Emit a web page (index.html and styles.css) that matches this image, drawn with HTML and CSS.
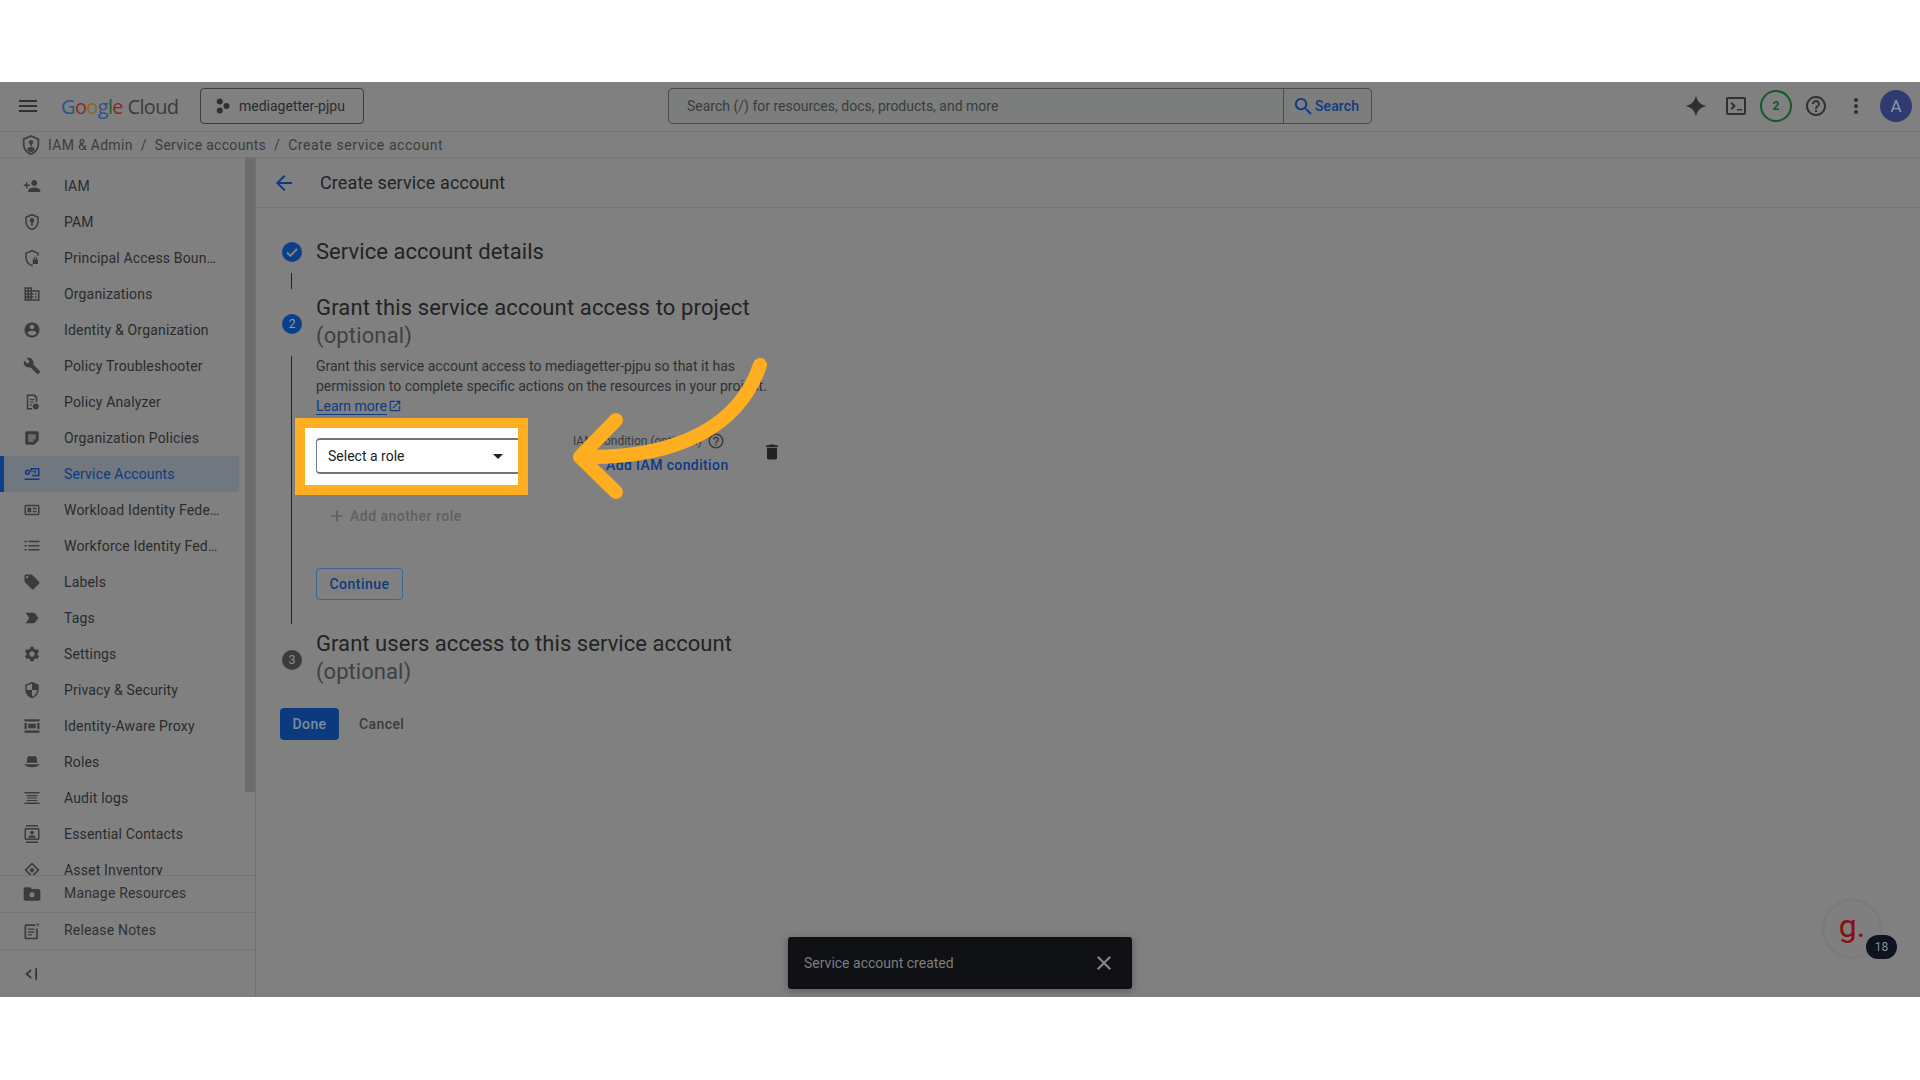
FILE: index.html
```html
<!DOCTYPE html>
<html lang="en">
<head>
    <meta charset="UTF-8">
    <meta name="viewport" content="width=device-width, initial-scale=1.0">
    <title>Create service account</title>
    <link rel="stylesheet" href="styles.css">
</head>
<body>
    <div class="screen">
        <!-- Top bar -->
        <header class="topbar">
            <svg class="menu-icon" viewBox="0 0 24 24"><path d="M3 18h18v-2H3v2zm0-5h18v-2H3v2zm0-7v2h18V6H3z"/></svg>
            <div class="logo"><span class="g-blue">G</span><span class="g-red">o</span><span class="g-yellow">o</span><span class="g-blue">g</span><span class="g-green">l</span><span class="g-red">e</span> <span class="logo-cloud">Cloud</span></div>
            <button class="project-btn">
                <svg class="project-icon" viewBox="0 0 24 24"><circle cx="9" cy="6" r="4"/><circle cx="9" cy="18" r="4"/><circle cx="18" cy="12" r="4"/></svg>
                mediagetter-pjpu
            </button>
            <div class="search">
                <div class="search-input">Search (/) for resources, docs, products, and more</div>
                <div class="search-btn">
                    <svg class="search-icon" viewBox="0 0 24 24"><path d="M15.5 14h-.79l-.28-.27C15.41 12.59 16 11.11 16 9.5 16 5.91 13.09 3 9.5 3S3 5.91 3 9.5 5.91 16 9.5 16c1.61 0 3.09-.59 4.23-1.57l.27.28v.79l5 4.99L20.49 19l-4.99-5zm-6 0C7.01 14 5 11.99 5 9.5S7.01 5 9.5 5 14 7.01 14 9.5 11.99 14 9.5 14z"/></svg>
                    Search
                </div>
            </div>
            <div class="top-actions">
                <svg class="top-icon" viewBox="0 0 24 24"><path d="M12 1c.9 6.4 4.6 10.1 11 11-6.4.9-10.1 4.6-11 11-.9-6.4-4.6-10.1-11-11 6.4-.9 10.1-4.6 11-11z"/></svg>
                <svg class="top-icon" viewBox="0 0 24 24"><path d="M20 3H4c-1.1 0-2 .9-2 2v14c0 1.1.9 2 2 2h16c1.1 0 2-.9 2-2V5c0-1.1-.9-2-2-2zm0 16H4V5h16v14zM6.5 9.4 7.9 8l4 4-4 4-1.4-1.4L9.1 12 6.5 9.4zM13 15h5v1.5h-5V15z"/></svg>
                <div class="notif-ring">2</div>
                <svg class="top-icon" viewBox="0 0 24 24"><path d="M11 18h2v-2h-2v2zm1-16C6.48 2 2 6.48 2 12s4.48 10 10 10 10-4.48 10-10S17.52 2 12 2zm0 18c-4.41 0-8-3.59-8-8s3.59-8 8-8 8 3.59 8 8-3.59 8-8 8zm0-14c-2.21 0-4 1.79-4 4h2c0-1.1.9-2 2-2s2 .9 2 2c0 2-3 1.75-3 5h2c0-2.25 3-2.5 3-5 0-2.21-1.79-4-4-4z"/></svg>
                <svg class="top-icon" viewBox="0 0 24 24"><path d="M12 8c1.1 0 2-.9 2-2s-.9-2-2-2-2 .9-2 2 .9 2 2 2zm0 2c-1.1 0-2 .9-2 2s.9 2 2 2 2-.9 2-2-.9-2-2-2zm0 6c-1.1 0-2 .9-2 2s.9 2 2 2 2-.9 2-2-.9-2-2-2z"/></svg>
                <div class="avatar">A</div>
            </div>
        </header>

        <!-- Breadcrumb -->
        <div class="crumbs">
            <svg class="crumb-icon" viewBox="0 0 24 24"><path d="M12 1 3 5v6c0 5.55 3.84 10.74 9 12 5.16-1.26 9-6.45 9-12V5l-9-4zm7 10c0 4.52-2.98 8.69-7 9.93-4.02-1.24-7-5.41-7-9.93V6.3l7-3.11 7 3.11V11z"/><path d="M12 6.5a2.5 2.5 0 0 1 1 4.8V13h-2v-1.7a2.5 2.5 0 0 1 1-4.8zM8 17c0-2 2-3 4-3s4 1 4 3v.6c-1 1-2.5 2-4 2.5-1.5-.5-3-1.5-4-2.5V17z"/></svg>
            <span>IAM &amp; Admin</span><span class="crumb-sep">/</span><span>Service accounts</span><span class="crumb-sep">/</span><span class="crumb-current">Create service account</span>
        </div>

        <div class="body-row">
            <!-- Sidebar -->
            <aside class="sidebar">
                <div class="nav-scroll">
                    <nav class="nav-list">
                        <a class="nav-item"><svg class="nav-icon" viewBox="0 0 24 24"><path d="M15 12c2.21 0 4-1.79 4-4s-1.79-4-4-4-4 1.79-4 4 1.79 4 4 4zm-9-2V7H4v3H1v2h3v3h2v-3h3v-2H6zm9 4c-2.67 0-8 1.34-8 4v2h16v-2c0-2.66-5.33-4-8-4z"/></svg>IAM</a>
                        <a class="nav-item"><svg class="nav-icon" viewBox="0 0 24 24"><path d="M12 1 3 5v6c0 5.55 3.84 10.74 9 12 5.16-1.26 9-6.45 9-12V5l-9-4zm7 10c0 4.52-2.98 8.69-7 9.93-4.02-1.24-7-5.41-7-9.93V6.3l7-3.11 7 3.11V11z"/><path d="M12 6.5a3 3 0 0 1 1.2 5.75V17h-2.4v-4.75A3 3 0 0 1 12 6.5z"/></svg>PAM</a>
                        <a class="nav-item"><svg class="nav-icon" viewBox="0 0 24 24"><path d="M12 1 3 5v6c0 5.55 3.84 10.74 9 12l1.5-.4-.9-1.8-.6.1C8 19.7 5 15.5 5 11V6.3l7-3.11 7 3.11V9h2V5l-9-4z"/><path d="M19 14v-1a2.5 2.5 0 0 0-5 0v1h-1v6h7v-6h-1zm-3.5-1a1 1 0 0 1 2 0v1h-2v-1z"/></svg>Principal Access Boun…</a>
                        <a class="nav-item"><svg class="nav-icon" viewBox="0 0 24 24"><path d="M12 7V3H2v18h20V7H12zM6 19H4v-2h2v2zm0-4H4v-2h2v2zm0-4H4V9h2v2zm0-4H4V5h2v2zm4 12H8v-2h2v2zm0-4H8v-2h2v2zm0-4H8V9h2v2zm0-4H8V5h2v2zm10 12h-8v-2h2v-2h-2v-2h2v-2h-2V9h8v10zm-2-8h-2v2h2v-2zm0 4h-2v2h2v-2z"/></svg>Organizations</a>
                        <a class="nav-item"><svg class="nav-icon" viewBox="0 0 24 24"><path d="M12 2C6.48 2 2 6.48 2 12s4.48 10 10 10 10-4.48 10-10S17.52 2 12 2zm0 3c1.66 0 3 1.34 3 3s-1.34 3-3 3-3-1.34-3-3 1.34-3 3-3zm0 14.2c-2.5 0-4.71-1.28-6-3.22.03-1.99 4-3.08 6-3.08 1.99 0 5.97 1.09 6 3.08-1.29 1.94-3.5 3.22-6 3.22z"/></svg>Identity &amp; Organization</a>
                        <a class="nav-item"><svg class="nav-icon" viewBox="0 0 24 24"><path d="m22.7 19-9.1-9.1c.9-2.3.4-5-1.5-6.9-2-2-5-2.4-7.4-1.3L9 6 6 9 1.6 4.7C.4 7.1.9 10.1 2.9 12.1c1.9 1.9 4.6 2.4 6.9 1.5l9.1 9.1c.4.4 1 .4 1.4 0l2.3-2.3c.5-.4.5-1.1.1-1.4z"/></svg>Policy Troubleshooter</a>
                        <a class="nav-item"><svg class="nav-icon" viewBox="0 0 24 24"><path d="M5 2h11l3 3v7h-2V6h-2V4H7v16h5v2H5V2z"/><path d="M9 8h6v1.5H9zM9 11.5h5V13H9zM9 15h3v1.5H9z"/><circle cx="17" cy="18" r="4"/></svg>Policy Analyzer</a>
                        <a class="nav-item"><svg class="nav-icon" viewBox="0 0 24 24"><path d="M19 3H5c-1.1 0-2 .9-2 2v14c0 1.1.9 2 2 2h10l6-6V5c0-1.1-.9-2-2-2zM7 7h10v7h-3v3H7V7z"/><rect x="6" y="6" width="12" height="10" opacity=".3"/></svg>Organization Policies</a>
                        <a class="nav-item active"><svg class="nav-icon" viewBox="0 0 24 24"><path d="M10 4h12v11H12v-2h8V6h-8v1.5h-2V4zM2 18h20v2H2z"/><path d="M6 6a3.5 3.5 0 1 1 0 7 3.5 3.5 0 0 1 0-7zm0 2a1.5 1.5 0 1 0 0 3 1.5 1.5 0 0 0 0-3zM9 8.5h6V11h2V8.5h1v-1H9z"/></svg>Service Accounts</a>
                        <a class="nav-item"><svg class="nav-icon" viewBox="0 0 24 24"><path d="M20 5H4c-1.1 0-2 .9-2 2v10c0 1.1.9 2 2 2h16c1.1 0 2-.9 2-2V7c0-1.1-.9-2-2-2zm0 12H4V7h16v10z"/><path d="M6 9h5v6H6zM13 9h5v2h-5zM13 13h5v2h-5z"/></svg>Workload Identity Fede…</a>
                        <a class="nav-item"><svg class="nav-icon" viewBox="0 0 24 24"><path d="M2 12.5h3v-2H2v2zM2 18h3v-2H2v2zM2 7h3V5H2v2zm5 5.5h15v-2H7v2zM7 18h15v-2H7v2zM7 5v2h15V5H7z"/></svg>Workforce Identity Fed…</a>
                        <a class="nav-item"><svg class="nav-icon" viewBox="0 0 24 24"><path d="m21.41 11.58-9-9C12.05 2.22 11.55 2 11 2H4c-1.1 0-2 .9-2 2v7c0 .55.22 1.05.59 1.42l9 9c.36.36.86.58 1.41.58s1.05-.22 1.41-.59l7-7c.37-.36.59-.86.59-1.41s-.23-1.06-.59-1.42zM5.5 7C4.67 7 4 6.33 4 5.5S4.67 4 5.5 4 7 4.67 7 5.5 6.33 7 5.5 7z"/></svg>Labels</a>
                        <a class="nav-item"><svg class="nav-icon" viewBox="0 0 24 24"><path d="m3.5 18.99 11 .01c.67 0 1.27-.33 1.63-.84L20.5 12l-4.37-6.16c-.36-.51-.96-.84-1.63-.84l-11 .01L8.34 12 3.5 18.99z"/></svg>Tags</a>
                        <a class="nav-item"><svg class="nav-icon" viewBox="0 0 24 24"><path d="M19.14 12.94c.04-.3.06-.61.06-.94 0-.32-.02-.64-.07-.94l2.03-1.58c.18-.14.23-.41.12-.61l-1.92-3.32c-.12-.22-.37-.29-.59-.22l-2.39.96c-.5-.38-1.03-.7-1.62-.94l-.36-2.54c-.04-.24-.24-.41-.48-.41h-3.84c-.24 0-.43.17-.47.41l-.36 2.54c-.59.24-1.13.57-1.62.94l-2.39-.96c-.22-.08-.47 0-.59.22L2.74 8.87c-.12.21-.08.47.12.61l2.03 1.58c-.05.3-.09.63-.09.94s.02.64.07.94l-2.03 1.58c-.18.14-.23.41-.12.61l1.92 3.32c.12.22.37.29.59.22l2.39-.96c.5.38 1.03.7 1.62.94l.36 2.54c.05.24.24.41.48.41h3.84c.24 0 .44-.17.47-.41l.36-2.54c.59-.24 1.13-.56 1.62-.94l2.39.96c.22.08.47 0 .59-.22l1.92-3.32c.12-.22.07-.47-.12-.61l-2.01-1.58zM12 15.6c-1.98 0-3.6-1.62-3.6-3.6s1.62-3.6 3.6-3.6 3.6 1.62 3.6 3.6-1.62 3.6-3.6 3.6z"/></svg>Settings</a>
                        <a class="nav-item"><svg class="nav-icon" viewBox="0 0 24 24"><path d="M12 1 3 5v6c0 5.55 3.84 10.74 9 12 5.16-1.26 9-6.45 9-12V5l-9-4zm0 10.99h7c-.53 4.12-3.28 7.79-7 8.94V12H5V6.3l7-3.11v8.8z"/></svg>Privacy &amp; Security</a>
                        <a class="nav-item"><svg class="nav-icon" viewBox="0 0 24 24"><path d="M2 3h20v3H2zM2 18h20v3H2zM2 8h3v8H2zM19 8h3v8h-3zM7 9h10v6H7z"/></svg>Identity-Aware Proxy</a>
                        <a class="nav-item"><svg class="nav-icon" viewBox="0 0 24 24"><path d="M6 6c.3-1.2 1.2-2 2.4-2 1.2 0 2 .8 3.6.8S14.4 4 15.6 4c1.2 0 2.1.8 2.4 2l1.2 7H4.8L6 6zM2 15h20c-1 2.7-5 4-10 4S3 17.7 2 15z"/></svg>Roles</a>
                        <a class="nav-item"><svg class="nav-icon" viewBox="0 0 24 24"><path d="M2 4h20v2H2zM5 8h14v1.5H5zM5 11.2h14v1.5H5zM5 14.5h14V16H5zM2 18h20v2H2z"/></svg>Audit logs</a>
                        <a class="nav-item"><svg class="nav-icon" viewBox="0 0 24 24"><path d="M4 0h16v2H4zM4 22h16v2H4zM20 4H4C2.9 4 2 4.9 2 6v12c0 1.1.9 2 2 2h16c1.1 0 2-.9 2-2V6c0-1.1-.9-2-2-2zm0 14H4V6h16v12z"/><circle cx="12" cy="10" r="2.5"/><path d="M7 17c0-2.5 2.5-3.5 5-3.5s5 1 5 3.5H7z"/></svg>Essential Contacts</a>
                        <a class="nav-item"><svg class="nav-icon" viewBox="0 0 24 24"><path d="m12 2 10 10-10 10L2 12 12 2zm0 3-7 7 7 7 7-7-7-7zm0 3.5 3.5 3.5-3.5 3.5L8.5 12 12 8.5z"/></svg>Asset Inventory</a>
                    </nav>
                    <div class="nav-scrollbar"></div>
                </div>
                <a class="nav-foot"><svg class="foot-icon" viewBox="0 0 24 24"><path d="M20 6h-8l-2-2H4c-1.1 0-2 .9-2 2v12c0 1.1.9 2 2 2h16c1.1 0 2-.9 2-2V8c0-1.1-.9-2-2-2z"/><circle class="foot-gear" cx="12" cy="13" r="3"/></svg>Manage Resources</a>
                <a class="nav-foot"><svg class="foot-icon" viewBox="0 0 24 24"><path d="M16 4H5c-1.1 0-2 .9-2 2v14c0 1.1.9 2 2 2h12c1.1 0 2-.9 2-2V9h-2v11H5V6h11V4zM7 9h8v1.5H7zM7 12.5h8V14H7zM7 16h5v1.5H7zM19 2l.6 1.9 1.9.6-1.9.6L19 7l-.6-1.9-1.9-.6 1.9-.6L19 2z"/></svg>Release Notes</a>
                <div class="collapse"><svg class="collapse-icon" viewBox="0 0 24 24"><path d="M11 6 4 12l7 6v-2.6L7 12l4-3.4V6zM16 5h2v14h-2z"/></svg></div>
            </aside>

            <!-- Main -->
            <main class="main">
                <div class="page-head">
                    <svg class="back-icon" viewBox="0 0 24 24"><path d="M20 11H7.83l5.59-5.59L12 4l-8 8 8 8 1.41-1.41L7.83 13H20v-2z"/></svg>
                    <h1 class="page-title">Create service account</h1>
                </div>
                <div class="stepper">
                    <div class="step-head">
                        <svg class="step-check" viewBox="0 0 20 20"><circle cx="10" cy="10" r="10"/><path class="check-mark" d="m5 10.5 3.4 3.3L15 7"/></svg>
                        <h2 class="step-title">Service account details</h2>
                    </div>
                    <div class="step-link"></div>
                    <div class="step-head">
                        <div class="step-num">2</div>
                        <h2 class="step-title step-wide">Grant this service account access to project<br><span class="optional">(optional)</span></h2>
                    </div>
                    <div class="step-body">
                        <p class="step-desc">Grant this service account access to mediagetter-pjpu so that it has<br>permission to complete specific actions on the resources in your project.<br><a class="learn-more">Learn more</a><svg class="ext-icon" viewBox="0 0 24 24"><path d="M19 19H5V5h7V3H5c-1.11 0-2 .9-2 2v14c0 1.1.89 2 2 2h14c1.1 0 2-.9 2-2v-7h-2v7zM14 3v2h3.59l-9.83 9.83 1.41 1.41L19 6.41V10h2V3h-7z"/></svg></p>
                        <div class="role-row">
                            <div class="role-cell">
                                <div class="role-frame"></div>
                                <div class="role-select">Select a role<span class="caret"></span></div>
                            </div>
                            <div class="condition">
                                <div class="condition-label">IAM condition (optional)<svg class="help-icon" viewBox="0 0 24 24"><path d="M11 18h2v-2h-2v2zm1-16C6.48 2 2 6.48 2 12s4.48 10 10 10 10-4.48 10-10S17.52 2 12 2zm0 18c-4.41 0-8-3.59-8-8s3.59-8 8-8 8 3.59 8 8-3.59 8-8 8zm0-14c-2.21 0-4 1.79-4 4h2c0-1.1.9-2 2-2s2 .9 2 2c0 2-3 1.75-3 5h2c0-2.25 3-2.5 3-5 0-2.21-1.79-4-4-4z"/></svg></div>
                                <div class="condition-add">Add IAM condition</div>
                            </div>
                            <svg class="trash-icon" viewBox="0 0 24 24"><path d="M6 19c0 1.1.9 2 2 2h8c1.1 0 2-.9 2-2V7H6v12zM19 4h-3.5l-1-1h-5l-1 1H5v2h14V4z"/></svg>
                        </div>
                        <div class="add-role"><svg class="plus-icon" viewBox="0 0 24 24"><path d="M19 13h-6v6h-2v-6H5v-2h6V5h2v6h6v2z"/></svg>Add another role</div>
                        <button class="continue-btn">Continue</button>
                    </div>
                    <div class="step-head step-three">
                        <div class="step-num grey">3</div>
                        <h2 class="step-title">Grant users access to this service account<br><span class="optional">(optional)</span></h2>
                    </div>
                    <div class="form-actions">
                        <button class="done-btn">Done</button>
                        <button class="cancel-btn">Cancel</button>
                    </div>
                </div>
            </main>
        </div>

        <!-- Overlays -->
        <svg class="arrow" viewBox="0 0 1920 915"><path d="M760 283C740 343 680 375 590 375"/><path d="M616 338 580 375 616 410"/></svg>
        <div class="toast"><span>Service account created</span><svg class="toast-close" viewBox="0 0 24 24"><path d="M19 6.41 17.59 5 12 10.59 6.41 5 5 6.41 10.59 12 5 17.59 6.41 19 12 13.41 17.59 19 19 17.59 13.41 12 19 6.41z"/></svg></div>
        <div class="g-widget">g<span class="g-dot">.</span><span class="g-badge">18</span></div>
    </div>
</body>
</html>
```

FILE: styles.css
```css
* {
    box-sizing: border-box;
}
body {
    margin: 0;
    background-color: #fff;
    font-family: Roboto, "Liberation Sans", sans-serif;
    font-size: 14px;
    color: #2a2b2d;
}
button {
    font-family: inherit;
}
.screen {
    position: relative;
    display: flex;
    flex-direction: column;
    height: 915px;
    margin-top: 82px;
    background-color: #808080;
    overflow: hidden;
}

/* top bar */
.topbar {
    display: flex;
    align-items: center;
    flex: 0 0 50px;
    padding-bottom: 1px;
    border-bottom: 1px solid #767676;
}
.menu-icon {
    width: 24px;
    height: 24px;
    margin-left: 16px;
    fill: #2f3032;
}
.logo {
    width: 120px;
    margin-left: 21px;
    font-family: "Open Sans", sans-serif;
    font-size: 20px;
    letter-spacing: -.65px;
    white-space: nowrap;
}
.g-blue { color: #2a5391; }
.g-red { color: #8b2a22; }
.g-yellow { color: #8a6a10; }
.g-green { color: #1b6332; }
.logo-cloud { color: #3a3b3d; }
.project-btn {
    display: flex;
    align-items: center;
    width: 164px;
    height: 36px;
    margin-left: 19px;
    padding: 0 0 0 12px;
    border: 1px solid #3c3d3f;
    border-radius: 4px;
    background: none;
    font-size: 14px;
    color: #2a2b2d;
}
.project-icon {
    width: 18px;
    height: 18px;
    margin-right: 8px;
    fill: #2f3032;
}
.search {
    display: flex;
    width: 704px;
    height: 36px;
    margin-left: 304px;
    border: 1px solid #4a4b4c;
    border-radius: 4px;
    background-color: #7c7e7d;
}
.search-input {
    flex: 1;
    padding-left: 18px;
    line-height: 34px;
    color: #3a3b3d;
}
.search-btn {
    display: flex;
    align-items: center;
    width: 88px;
    padding-left: 9px;
    border-left: 1px solid #4a4b4c;
    font-weight: 500;
    letter-spacing: .1px;
    color: #0e3b80;
}
.search-icon {
    width: 23px;
    height: 23px;
    margin-left: -1px;
    fill: #0e3b80;
}
.top-actions {
    display: flex;
    align-items: center;
    margin-left: 312px;
}
.top-icon {
    width: 24px;
    height: 24px;
    margin-right: 16px;
    fill: #2f3032;
}
.notif-ring {
    width: 32px;
    height: 32px;
    margin: 0 12px 0 -4px;
    border: 2px solid #0f5a2a;
    border-radius: 50%;
    font-size: 12px;
    font-weight: 700;
    line-height: 28px;
    text-align: center;
    color: #0f5a2a;
}
.avatar {
    width: 32px;
    height: 32px;
    margin-left: -4px;
    border-radius: 50%;
    background-color: #2f3a70;
    font-size: 17px;
    line-height: 32px;
    text-align: center;
    color: #8d93b5;
}

/* breadcrumb */
.crumbs {
    display: flex;
    align-items: center;
    flex: 0 0 26px;
    padding-left: 20px;
    border-bottom: 1px solid #767676;
    letter-spacing: .3px;
    color: #3b3c3e;
}
.crumb-icon {
    width: 22px;
    height: 22px;
    margin-right: 6px;
    fill: #3f4042;
}
.crumb-sep {
    margin: 0 8px;
}
.crumb-current {
    letter-spacing: .57px;
}

/* sidebar */
.body-row {
    display: flex;
    flex: 1;
    min-height: 0;
}
.sidebar {
    display: flex;
    flex-direction: column;
    flex: 0 0 256px;
    border-right: 1px solid #727272;
}
.nav-scroll {
    display: flex;
    flex: 0 0 717px;
    min-height: 0;
    overflow: hidden;
}
.nav-list {
    flex: 0 0 245px;
    padding-top: 10px;
}
.nav-item {
    display: flex;
    align-items: center;
    width: 239px;
    height: 36px;
    border-left: 4px solid transparent;
    letter-spacing: .17px;
    color: #2a2b2d;
    white-space: nowrap;
}
.nav-item.active {
    border-left-color: #0b3f8a;
    background-color: #70777f;
    color: #0e3b80;
}
.nav-icon {
    flex: none;
    width: 18px;
    height: 18px;
    margin: 0 23px 0 19px;
    fill: #3a3b3d;
}
.active .nav-icon {
    fill: #0e3b80;
}
.nav-scrollbar {
    flex: 0 0 10px;
    height: 634px;
    background-color: #6c6c6c;
}
.nav-foot {
    display: flex;
    align-items: center;
    flex: 0 0 37px;
    padding: 0 0 3px 23px;
    border-top: 1px solid #757575;
    letter-spacing: .17px;
    color: #2f3032;
}
.foot-icon {
    width: 20px;
    height: 20px;
    margin: 3px 22px 0 -1px;
    fill: #3a3b3d;
}
.foot-gear {
    fill: #808080;
}
.collapse {
    flex: 1;
    display: flex;
    align-items: center;
    padding-left: 22px;
    border-top: 1px solid #757575;
}
.collapse-icon {
    width: 20px;
    height: 20px;
    fill: #2f3032;
}

/* main */
.main {
    flex: 1;
}
.page-head {
    display: flex;
    align-items: center;
    height: 50px;
    padding-left: 16px;
    border-bottom: 1px solid #767676;
}
.back-icon {
    width: 24px;
    height: 24px;
    margin-right: 24px;
    fill: #0e3b80;
}
.page-title {
    margin: 0;
    font-size: 18px;
    font-weight: 400;
    letter-spacing: .1px;
    color: #222325;
}
.stepper {
    padding: 30px 0 0 24px;
}
.step-head {
    display: flex;
    align-items: center;
    padding-left: 2px;
}
.step-check {
    flex: none;
    width: 20px;
    height: 20px;
    margin-right: 14px;
    fill: #0b3f8a;
}
.check-mark {
    fill: none;
    stroke: #808080;
    stroke-width: 2;
}
.step-num {
    flex: none;
    width: 20px;
    height: 20px;
    margin: 4px 14px 0 0;
    border-radius: 50%;
    background-color: #0b3f8a;
    font-size: 12px;
    line-height: 20px;
    text-align: center;
    color: #8a97b0;
}
.step-num.grey {
    background-color: #3a3b3e;
    color: #8b8b8b;
}
.step-title {
    margin: 0;
    font-size: 22px;
    font-weight: 400;
    line-height: 28px;
    letter-spacing: .05px;
    color: #222325;
}
.step-wide {
    letter-spacing: .14px;
}
.optional {
    color: #3f4042;
}
.step-link {
    width: 1px;
    height: 16px;
    margin: 7px 0 5px 11px;
    background-color: #202124;
}
.step-body {
    height: 268px;
    margin: 6px 0 6px 11px;
    padding-left: 24px;
    border-left: 1px solid #202124;
}
.step-desc {
    margin: 0;
    line-height: 20px;
    color: #2f3032;
}
.learn-more {
    border-bottom: 1px solid #0e3b80;
    color: #0e3b80;
}
.ext-icon {
    width: 14px;
    height: 14px;
    margin-left: 1px;
    vertical-align: -2px;
    fill: #0e3b80;
}
.role-row {
    display: flex;
    align-items: flex-start;
    margin-top: 17px;
}
.role-cell {
    position: relative;
    flex: 0 0 202px;
    margin-top: 5px;
}
.role-frame {
    position: absolute;
    top: -20px;
    right: -10px;
    bottom: -21px;
    left: -21px;
    border: 10px solid #ffae21;
    background-color: #fff;
}
.role-select {
    position: relative;
    display: flex;
    align-items: center;
    justify-content: space-between;
    height: 36px;
    padding: 0 15px 0 11px;
    border: 1px solid #747474;
    border-width: 2px 0 2px 1px;
    border-radius: 4px 0 0 4px;
    color: #202124;
}
.caret {
    width: 0;
    height: 0;
    border-top: 5px solid #202124;
    border-right: 5px solid transparent;
    border-left: 5px solid transparent;
}
.condition {
    flex: 0 0 186px;
    margin-left: 55px;
}
.condition-label {
    display: flex;
    align-items: center;
    height: 16px;
    font-size: 12px;
    color: #3a3b3d;
}
.help-icon {
    width: 18px;
    height: 18px;
    margin-left: 5px;
    fill: #3a3b3d;
}
.condition-add {
    margin-top: 8px;
    padding-left: 33px;
    font-weight: 500;
    letter-spacing: .38px;
    color: #0e3b80;
}
.trash-icon {
    width: 20px;
    height: 20px;
    margin: 9px 0 0 3px;
    fill: #222325;
}
.add-role {
    display: flex;
    align-items: center;
    height: 24px;
    margin-top: 30px;
    padding-left: 11px;
    font-weight: 500;
    letter-spacing: .48px;
    color: #5e5f60;
}
.plus-icon {
    width: 20px;
    height: 20px;
    margin-right: 3px;
    fill: #5e5f60;
}
.continue-btn {
    display: block;
    width: 87px;
    height: 32px;
    margin-top: 40px;
    padding: 0;
    border: 1px solid #3f6294;
    border-radius: 4px;
    background: none;
    font-size: 14px;
    font-weight: 500;
    letter-spacing: .5px;
    color: #0e3b80;
}
.form-actions {
    display: flex;
    align-items: center;
    margin-top: 22px;
}
.done-btn {
    width: 59px;
    height: 32px;
    padding: 0;
    border: none;
    border-radius: 4px;
    background-color: #0b3a7e;
    font-size: 14px;
    font-weight: 500;
    letter-spacing: .4px;
    color: #7f8ba0;
}
.cancel-btn {
    margin-left: 20px;
    padding: 0;
    border: none;
    background: none;
    font-size: 14px;
    font-weight: 500;
    letter-spacing: .4px;
    color: #3a3b3d;
}

/* overlays */
.arrow {
    position: absolute;
    top: 0;
    left: 0;
    width: 1920px;
    height: 915px;
    pointer-events: none;
}
.arrow path {
    fill: none;
    stroke: #ffae21;
    stroke-width: 14;
    stroke-linecap: round;
    stroke-linejoin: round;
}
.toast {
    position: absolute;
    top: 855px;
    left: 788px;
    display: flex;
    align-items: center;
    justify-content: space-between;
    width: 344px;
    height: 52px;
    padding: 0 16px;
    border-radius: 3px;
    background-color: #101114;
    box-shadow: 0 2px 8px rgba(0, 0, 0, .3);
    color: #7c7d7f;
}
.toast-close {
    width: 24px;
    height: 24px;
    fill: #8a8a8a;
}
.g-widget {
    position: absolute;
    top: 819px;
    left: 1824px;
    width: 56px;
    height: 56px;
    border-radius: 50%;
    background-color: #7f7f7f;
    box-shadow: 0 0 4px rgba(0, 0, 0, .15);
    font-size: 32px;
    line-height: 50px;
    text-align: center;
    color: #8a0f0f;
}
.g-badge {
    position: absolute;
    top: 34px;
    left: 42px;
    width: 31px;
    height: 24px;
    border-radius: 12px;
    background-color: #0d1420;
    font-size: 12px;
    line-height: 24px;
    color: #8a8c90;
}
```
